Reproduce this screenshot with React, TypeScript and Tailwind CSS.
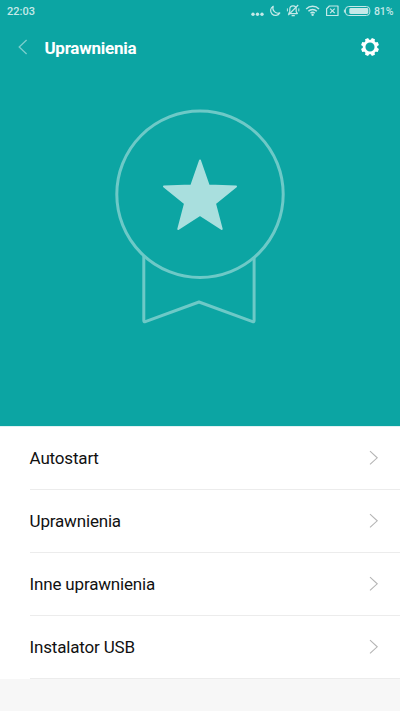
const items = ["Autostart", "Uprawnienia", "Inne uprawnienia", "Instalator USB"];

function StatusIcons() {
    return (
        <svg width="121" height="22" viewBox="250 0 121 22" fill="none" stroke="#c5e9e8" strokeWidth="1.2">
            {/* Notification dots */}
            <g fill="#c5e9e8" stroke="none">
                <circle cx="253" cy="14.3" r="1.7" />
                <circle cx="257.5" cy="14.3" r="1.7" />
                <circle cx="262" cy="14.3" r="1.7" />
            </g>

            {/* Do not disturb */}
            <path d="M273.2 6.2a4.9 4.9 0 1 0 6.6 6.7a5.2 5.2 0 0 1-6.6-6.7z" strokeLinejoin="round" />

            {/* Muted bell */}
            <path d="M288.8 13.6L289.8 11.6V9.2C289.8 4.8 296.2 4.8 296.2 9.2V11.6L297.4 13.6z" strokeLinejoin="round" />
            <path d="M291.6 15.6h3.2M298.2 5L288.2 15.2" />
            <path d="M287.4 8.4v3M298.8 8.4v3" strokeWidth="1" />

            {/* Wifi */}
            <path d="M306.2 9a9 9 0 0 1 12.8 0M308.4 11.2a6 6 0 0 1 8.4 0M310.5 13.3a3 3 0 0 1 4.2 0" strokeWidth="1.5" />
            <circle cx="312.6" cy="14.7" r="1.2" fill="#c5e9e8" stroke="none" />

            {/* No SIM */}
            <path d="M329.4 6h8.6v9.5h-11.4V8.7z" strokeLinejoin="round" />
            <path d="M330.1 8.6l4.6 4.6M334.7 8.6l-4.6 4.6" />

            {/* Battery */}
            <rect x="345.4" y="6.5" width="24.4" height="9" rx="3.4" strokeWidth="1" />
            <rect x="349.3" y="8" width="19" height="6" rx="1.4" fill="#c5e9e8" stroke="none" />
            <path d="M344.4 9.6v3" strokeWidth="1" />
        </svg>
    );
}

function Gear() {
    return (
        <svg width="18" height="18" viewBox="-9 -9 18 18" fill="none" stroke="#fff">
            <circle r="5.9" strokeWidth="2.7" />
            <g fill="#fff" stroke="none">
                {[22.5, 67.5, 112.5, 157.5, 202.5, 247.5, 292.5, 337.5].map((angle) => (
                    <path key={angle} d="M-2.2-6.4L-1.6-9H1.6L2.2-6.4z" transform={`rotate(${angle})`} />
                ))}
            </g>
        </svg>
    );
}

function Badge() {
    return (
        <svg width="180" height="220" viewBox="110 106 180 220" fill="none" stroke="#6dc9c7" strokeWidth="3">
            <circle cx="200" cy="194.3" r="83.2" />
            <path d="M143.8 256V320.6Q143.8 322.2 145.4 321.6L199 302L252.6 321.6Q254.1 322.2 254.1 320.6V257" strokeLinejoin="round" />
            <path
                d="M200 160.5L208.7 185.5L236 186.4L215 203.4L221.7 229L200 214.8L178.3 229L185 203.4L164 186.4L191.3 185.5z"
                fill="#a9dfde"
                stroke="#a9dfde"
                strokeWidth="2"
                strokeLinejoin="round"
            />
        </svg>
    );
}

export default function App() {
    return (
        <div className="h-[711px] w-[400px] overflow-hidden bg-[#f7f7f7] font-['Roboto',sans-serif]">
            <header className="h-[426px] bg-[#0ca5a3]">
                {/* Status bar */}
                <div className="flex h-[22px] items-center pr-[7px] pl-[7px] text-[11px] font-medium text-[#c5e9e8]">
                    <span className="mr-auto pt-0.5">22:03</span>
                    <StatusIcons />
                    <span className="ml-[3px] w-[19px] pt-px text-[10.5px] tracking-[-0.1px] whitespace-nowrap">81%</span>
                </div>

                {/* Title bar */}
                <div className="flex h-[50px] items-center pr-[21px] pl-[18px]">
                    <svg width="10" height="16" viewBox="0 0 10 16" fill="none" stroke="#7bcfcd" strokeWidth="1.3">
                        <path d="M8.6 1L1.2 8L8.6 15" />
                    </svg>
                    <h1 className="mr-auto ml-[16.4px] pt-0.5 text-[17px] leading-5 font-bold tracking-[-0.25px] text-white">
                        Uprawnienia
                    </h1>
                    <Gear />
                </div>

                <div className="flex justify-center pt-[34px]">
                    <Badge />
                </div>
            </header>

            <ul className="border-t border-[#dff3f3] bg-white">
                {items.map((item) => (
                    <li key={item} className="h-[63px] pl-[29.6px]">
                        <div className="flex h-full items-center justify-between border-b border-[#ececec] pr-[21px]">
                            <span className="text-[17px] leading-6 tracking-[-0.18px] text-[#111]">{item}</span>
                            <svg width="10" height="16" viewBox="0 0 10 16" fill="none" stroke="#b5b5b5" strokeWidth="1.1">
                                <path d="M1 1.2L8.2 7.8L1 14.4" />
                            </svg>
                        </div>
                    </li>
                ))}
            </ul>
        </div>
    );
}
